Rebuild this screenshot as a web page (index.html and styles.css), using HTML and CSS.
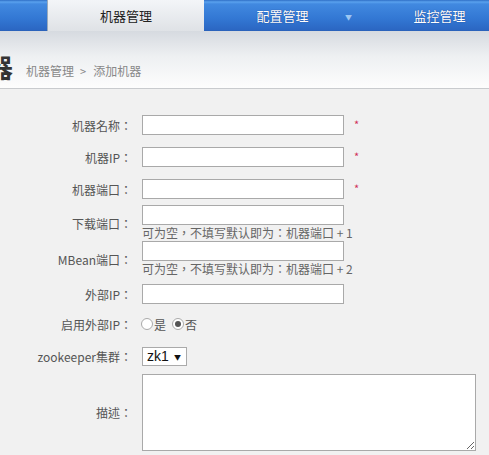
FILE: index.html
```
<!DOCTYPE html>
<html lang="zh-CN">
<head>
<meta charset="utf-8">
<title>添加机器</title>
<link rel="stylesheet" href="styles.css">
</head>
<body>
<nav class="nav">
  <div class="tab"></div>
  <div class="tab active">机器管理</div>
  <div class="tab">配置管理<span class="caret">▼</span></div>
  <div class="tab">监控管理</div>
</nav>
<header class="head">
  <h1 class="title">机器</h1>
  <div class="crumb">机器管理<span class="sep">&gt;</span>添加机器</div>
</header>
<main class="form">
  <div class="row r1">
    <label class="lbl">机器名称：</label>
    <div class="field"><input class="txt" type="text"><span class="req">*</span></div>
  </div>
  <div class="row r2">
    <label class="lbl">机器IP：</label>
    <div class="field"><input class="txt" type="text"><span class="req">*</span></div>
  </div>
  <div class="row r3">
    <label class="lbl">机器端口：</label>
    <div class="field"><input class="txt" type="text"><span class="req">*</span></div>
  </div>
  <div class="row r4">
    <label class="lbl">下载端口：</label>
    <div class="field col"><input class="txt" type="text"><span class="hint">可为空，不填写默认即为：机器端口 + 1</span></div>
  </div>
  <div class="row r5">
    <label class="lbl">MBean端口：</label>
    <div class="field col"><input class="txt" type="text"><span class="hint">可为空，不填写默认即为：机器端口 + 2</span></div>
  </div>
  <div class="row r6">
    <label class="lbl">外部IP：</label>
    <div class="field"><input class="txt" type="text"></div>
  </div>
  <div class="row r7">
    <label class="lbl">启用外部IP：</label>
    <div class="field radios">
      <label class="opt"><input class="rad" type="radio" name="ext">是</label>
      <label class="opt"><input class="rad" type="radio" name="ext" checked>否</label>
    </div>
  </div>
  <div class="row r8">
    <label class="lbl">zookeeper集群：</label>
    <div class="field"><span class="selwrap"><select class="sel"><option>zk1</option></select><span class="arrow">▼</span></span></div>
  </div>
  <div class="row r9">
    <label class="lbl">描述：</label>
    <div class="field"><textarea class="area"></textarea></div>
  </div>
</main>
</body>
</html>
```

FILE: styles.css
```
html, body {
  margin: 0;
  padding: 0;
}
body {
  width: 489px;
  height: 455px;
  overflow: hidden;
  background: #f1f1f1;
  font-family: "Noto Sans CJK SC", "Noto Sans", sans-serif;
  font-size: 12px;
  color: #555;
}
.nav {
  display: flex;
  height: 31px;
  margin-left: -110px;
  background: linear-gradient(#2f6fc6 0, #5aa2ee 2px, #4189e0 4px, #3378d4 18px, #2b66c2 30px, #2a5fb5 31px);
}
.tab {
  flex: 0 0 157px;
  position: relative;
  display: flex;
  align-items: center;
  justify-content: center;
  font-size: 13px;
  color: #fff;
  text-shadow: 0 0 1px rgba(0,0,60,0.6);
}
.tab.active {
  background: linear-gradient(#f3f5f8, #dfe2e6);
  color: #222;
  text-shadow: none;
  border-left: 1px solid #9ab;
  box-sizing: border-box;
}
.caret {
  position: absolute;
  left: 141px;
  top: 12px;
  font-size: 7px;
  color: #9cc6f2;
  text-shadow: none;
}
.head {
  box-sizing: border-box;
  display: flex;
  align-items: center;
  height: 58px;
  padding-top: 14px;
  border-bottom: 1px solid #c9cbce;
  background: linear-gradient(#d6dae0, #eef0f2 45%, #fdfdfd);
  overflow: hidden;
}
.title {
  margin: 0 0 0 -39px;
  font-size: 26px;
  font-weight: bold;
  color: #333;
  line-height: 30px;
}
.crumb {
  margin-left: 13px;
  padding-top: 8px;
  color: #888;
  font-size: 12px;
}
.sep {
  margin: 0 7px 0 6px;
  font-size: 11px;
}
.form {
  display: flex;
  flex-direction: column;
  padding-top: 26px;
}
.row {
  display: grid;
  grid-template-columns: 132px auto;
  column-gap: 10px;
  align-items: center;
}
.lbl {
  text-align: right;
  white-space: nowrap;
  color: #555;
  font-family: "Noto Sans CJK TC", "Noto Sans CJK SC", sans-serif;
  font-feature-settings: "locl" 0;
}
.field {
  display: flex;
  align-items: center;
}
.field.col {
  flex-direction: column;
  align-items: flex-start;
}
.txt {
  box-sizing: border-box;
  width: 202px;
  height: 20px;
  margin: 0;
  border: 1px solid #a9a9a9;
  background: #fff;
  padding: 1px 3px;
  font: inherit;
}
.req {
  margin-left: 10px;
  color: #d0305a;
  font-size: 11px;
  line-height: 12px;
  align-self: flex-start;
  padding-top: 3px;
}
.hint {
  line-height: 16px;
  color: #666;
  white-space: nowrap;
  font-family: "Noto Sans CJK TC", "Noto Sans CJK SC", sans-serif;
  font-feature-settings: "locl" 0;
}
.r2, .r3 { margin-top: 12px; }
.r4 { margin-top: 6px; }
.r5 { margin-top: 0; }
.r6 { margin-top: 7px; }
.r7 { margin-top: 10px; height: 20px; }
.r8 { margin-top: 13px; }
.r9 { margin-top: 8px; }
.radios {
  gap: 6px;
  margin-left: -1px;
}
.opt {
  display: flex;
  align-items: center;
  color: #555;
}
.rad {
  appearance: none;
  box-sizing: border-box;
  width: 12px;
  height: 12px;
  margin: 0 1px 0 0;
  border: 1px solid #aaa;
  border-radius: 50%;
  background: #fff;
  position: relative;
}
.rad:checked::after {
  content: "";
  position: absolute;
  left: 2px;
  top: 2px;
  width: 6px;
  height: 6px;
  border-radius: 50%;
  background: #555;
}
.selwrap {
  position: relative;
  display: inline-block;
}
.sel {
  appearance: none;
  box-sizing: border-box;
  width: 45px;
  height: 19px;
  margin: 0;
  border: 1px solid #aaa;
  border-radius: 0;
  background: #fff;
  color: #111;
  font-family: "Liberation Sans", Arial, sans-serif;
  font-size: 14px;
  line-height: 17px;
  padding: 0 0 0 4px;
}
.arrow {
  position: absolute;
  right: 6px;
  top: 5px;
  font-size: 7px;
  color: #111;
  pointer-events: none;
}
.area {
  box-sizing: border-box;
  width: 334px;
  height: 77px;
  margin: 0;
  border: 1px solid #a9a9a9;
  background: #fff;
  font: inherit;
  display: block;
}
```
